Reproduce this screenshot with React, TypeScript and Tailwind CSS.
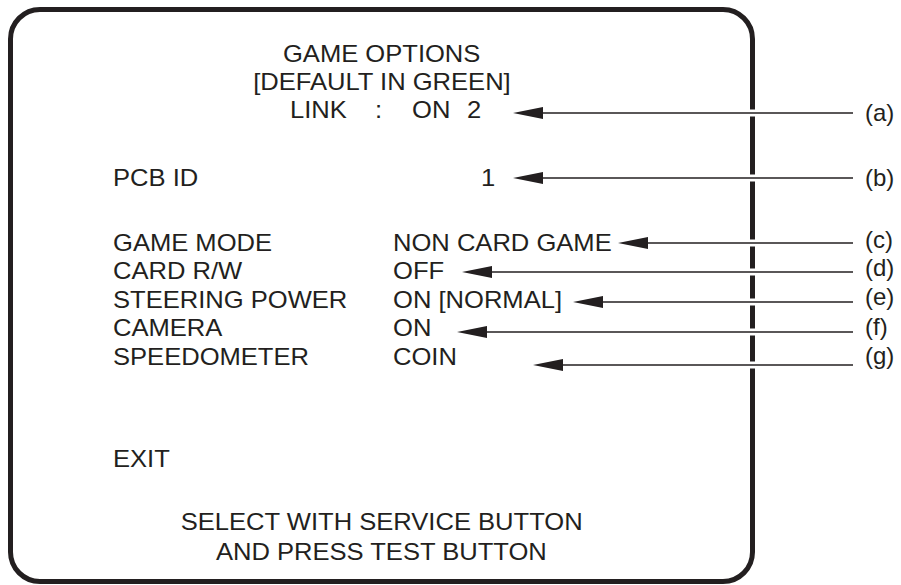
import React from "react";

const ink = "#231f20";

function T({ children, origin = "left" }: { children: React.ReactNode; origin?: "left" | "center" }) {
  return (
    <span
      className={
        origin === "left"
          ? "inline-block whitespace-pre origin-left scale-x-[1.065]"
          : "inline-block whitespace-pre origin-center scale-x-[1.065]"
      }
    >
      {children}
    </span>
  );
}

function Row({ label, value }: { label: string; value: string }) {
  return (
    <div className="flex h-[28.5px] items-center pl-[100px]">
      <div className="w-[280px]">
        <T>{label}</T>
      </div>
      <div>
        <T>{value}</T>
      </div>
    </div>
  );
}

const arrows = [
  { key: "a", tip: 513, y: 113, ly: 113 },
  { key: "b", tip: 513, y: 178, ly: 178 },
  { key: "c", tip: 618, y: 243, ly: 240 },
  { key: "d", tip: 462, y: 272, ly: 268 },
  { key: "e", tip: 573, y: 302, ly: 297 },
  { key: "f", tip: 457, y: 332, ly: 327 },
  { key: "g", tip: 533, y: 365, ly: 356 },
];

export default function App() {
  return (
    <div
      className="relative w-[901px] h-[585px] overflow-hidden bg-white text-[24px] text-[#231f20]"
      style={{ fontFamily: '"Liberation Sans", Arial, sans-serif' }}
    >
      <div className="pl-[8px] pt-[7px]">
        <div className="w-[747px] h-[577px] rounded-[32px] border-[5px] border-[#231f20]">
          <div className="pt-[28px]">
            <div className="h-[28px] leading-[28px] text-center">
              <T origin="center">GAME OPTIONS</T>
            </div>
            <div className="h-[28px] leading-[28px] text-center">
              <T origin="center">[DEFAULT IN GREEN]</T>
            </div>
            <div className="flex h-[28px] items-center pl-[277px]">
              <div className="w-[85px]">
                <T>LINK</T>
              </div>
              <div className="w-[37px]">
                <T>:</T>
              </div>
              <div className="w-[55px]">
                <T>ON</T>
              </div>
              <div>
                <T>2</T>
              </div>
            </div>
          </div>

          <div className="mt-[40px] flex h-[28px] items-center pl-[100px]">
            <div className="w-[368px]">
              <T>PCB ID</T>
            </div>
            <div>
              <T>1</T>
            </div>
          </div>

          <div className="mt-[36.5px] flex flex-col">
            <Row label="GAME MODE" value="NON CARD GAME" />
            <Row label="CARD R/W" value="OFF" />
            <Row label="STEERING POWER" value="ON [NORMAL]" />
            <Row label="CAMERA" value="ON" />
            <Row label="SPEEDOMETER" value="COIN" />
          </div>

          <div className="mt-[74px] flex h-[28px] items-center pl-[100px]">
            <T>EXIT</T>
          </div>

          <div className="mt-[34px] flex flex-col">
            <div className="h-[30px] leading-[30px] text-center">
              <T origin="center">SELECT WITH SERVICE BUTTON</T>
            </div>
            <div className="h-[30px] leading-[30px] text-center">
              <T origin="center">AND PRESS TEST BUTTON</T>
            </div>
          </div>
        </div>
      </div>

      <svg className="absolute left-0 top-0 pointer-events-none" width={901} height={585} viewBox="0 0 901 585">
        {arrows.map((a) => (
          <g key={a.key}>
            <rect x={746} y={a.y - 3.5} width={12} height={7} fill="#ffffff" />
            <line x1={a.tip + 28} y1={a.y} x2={853} y2={a.y} stroke={ink} strokeWidth={1.5} />
            <polygon points={`${a.tip},${a.y} ${a.tip + 30},${a.y - 6} ${a.tip + 30},${a.y + 6}`} fill={ink} />
          </g>
        ))}
      </svg>

      {arrows.map((a) => (
        <div
          key={a.key}
          className="absolute left-[865px] h-[28px] leading-[28px] whitespace-pre"
          style={{ top: a.ly - 14 }}
        >
          ({a.key})
        </div>
      ))}
    </div>
  );
}
